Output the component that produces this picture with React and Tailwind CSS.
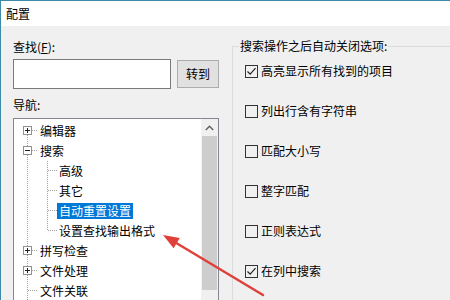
import React from 'react';

const FONT = { fontFamily: '"Noto Sans CJK SC", "Microsoft YaHei", "Noto Sans", sans-serif' };

// connector cell for the tree (20px tall)
const Cell = ({ w = 20, up, down, right, box }) => (
  <svg width={w} height={20} className="shrink-0 block">
    <g stroke="#a0a0a0" strokeDasharray="1 1" shapeRendering="crispEdges">
      {up && <line x1="9.5" y1="0" x2="9.5" y2={box ? 5 : 10} />}
      {down && <line x1="9.5" y1={box ? 14 : 10} x2="9.5" y2="20" />}
      {right && <line x1={box ? 14 : 10} y1="9.5" x2={w} y2="9.5" />}
    </g>
    {box && (
      <g shapeRendering="crispEdges">
        <rect x="5.5" y="5.5" width="8" height="8" fill="#fff" stroke="#919191" />
        <line x1="7" y1="9.5" x2="12" y2="9.5" stroke="#222" />
        {box === '+' && <line x1="9.5" y1="7" x2="9.5" y2="12" stroke="#222" />}
      </g>
    )}
  </svg>
);

const rows = [
  { label: '编辑器', level: 0, box: '+', first: true },
  { label: '搜索', level: 0, box: '-' },
  { label: '高级', level: 1 },
  { label: '其它', level: 1 },
  { label: '自动重置设置', level: 1, selected: true },
  { label: '设置查找输出格式', level: 1, last: true },
  { label: '拼写检查', level: 0, box: '+' },
  { label: '文件处理', level: 0, box: '+' },
  { label: '文件关联', level: 0 },
];

const TreeRow = ({ row }) => (
  <div className="flex h-[20px] items-center">
    {row.level === 0 ? (
      <>
        <Cell up={!row.first} down right box={row.box} />
        <span className="ml-px px-[1px] leading-[16px]">{row.label}</span>
      </>
    ) : (
      <>
        <Cell up down />
        <Cell w={19} up down={!row.last} right />
        <span
          className={
            'px-[2px] leading-[16px] ' +
            (row.selected ? 'bg-[#0078d7] text-white' : '')
          }
        >
          {row.label}
        </span>
      </>
    )}
  </div>
);

const CheckBox = ({ checked, label }) => (
  <div className="flex h-[20px] items-center">
    <div className="w-[13px] h-[13px] border border-[#333] bg-transparent flex items-center justify-center">
      {checked && (
        <svg width="11" height="11" viewBox="0 0 11 11">
          <path d="M1.5 5.5 L4.2 8.2 L9.5 2.2" fill="none" stroke="#222" strokeWidth="1.2" />
        </svg>
      )}
    </div>
    <span className="ml-[3px] leading-[16px]">{label}</span>
  </div>
);

export default function App() {
  return (
    <div
      className="relative w-[450px] h-[300px] overflow-hidden bg-[#f0f0f0] border-t border-l border-[#3d8aa8] text-[12px] text-black"
      style={FONT}
    >
      {/* title bar */}
      <div className="h-[25px] bg-white flex items-center pl-[5px] leading-[16px]">配置</div>

      <div className="flex">
        {/* left column */}
        <div className="w-[218px] shrink-0 pl-[12px] flex flex-col">
          <div className="mt-[13px] leading-[16px]">查找(<span className="underline">F</span>):</div>
          <div className="mt-[4px] flex items-center">
            <div className="w-[158px] h-[30px] bg-white border border-[#7a7a7a]" />
            <button className="ml-[6px] w-[42px] h-[28px] bg-[#e1e1e1] border border-[#adadad] leading-[16px]">
              转到
            </button>
          </div>
          <div className="mt-[8px] leading-[16px]">导航:</div>
          <div className="mt-[5px] h-[200px] border border-[#828790] bg-white flex">
            <div className="flex-1 pt-[2px] pl-[4px] flex flex-col">
              {rows.map((r) => (
                <TreeRow key={r.label} row={r} />
              ))}
            </div>
            <div className="w-[17px] bg-[#f0f0f0] flex flex-col">
              <div className="h-[17px] flex items-center justify-center">
                <svg width="9" height="6" viewBox="0 0 9 6">
                  <path d="M0.8 5 L4.5 1.3 L8.2 5" fill="none" stroke="#606060" strokeWidth="1.4" />
                </svg>
              </div>
              <div className="mx-px h-[154px] bg-[#cdcdcd]" />
            </div>
          </div>
        </div>

        {/* right group */}
        <fieldset className="ml-[13px] mt-[12px] w-[240px] h-[300px] shrink-0 border border-[#dcdcdc] pl-[12px]">
          <legend className="ml-[-6px] px-px leading-[16px]">搜索操作之后自动关闭选项:</legend>
          <div className="pt-[7px] flex flex-col gap-[20px]">
            <CheckBox checked label="高亮显示所有找到的项目" />
            <CheckBox label="列出行含有字符串" />
            <CheckBox label="匹配大小写" />
            <CheckBox label="整字匹配" />
            <CheckBox label="正则表达式" />
            <CheckBox checked label="在列中搜索" />
          </div>
        </fieldset>
      </div>

      {/* red annotation arrow */}
      <svg className="absolute left-0 top-0 pointer-events-none" width="450" height="300">
        <line x1="262" y1="294" x2="175.7" y2="242.2" stroke="#e0403a" strokeWidth="2.5" strokeLinecap="round" />
        <polygon points="162,234 178.8,237.1 172.6,247.3" fill="#e0403a" />
      </svg>
    </div>
  );
}
